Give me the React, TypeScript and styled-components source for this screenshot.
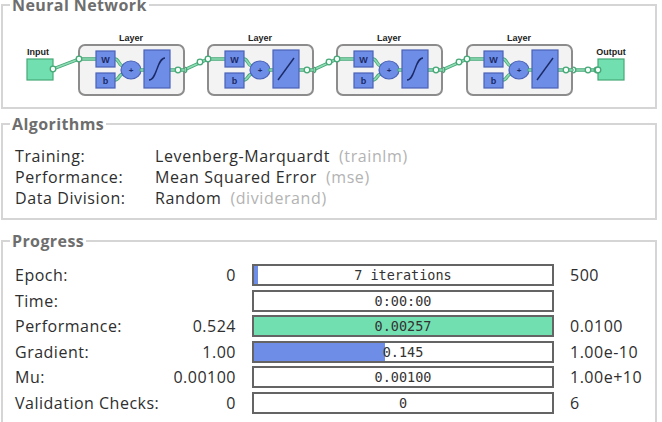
import React from 'react'
import styled, { createGlobalStyle } from 'styled-components'

const GREEN = '#72dfb0'
const GREEN_EDGE = '#46a877'
const WIRE = '#8fdcb4'
const BLUE = '#6e8de6'
const BLUE_EDGE = '#4a62b8'
const NAVY = '#1b2a66'

const GlobalStyle = createGlobalStyle`
  html, body { margin: 0; padding: 0; background: #fff; }
  body {
    font-family: "Open Sans", "Noto Sans", "Liberation Sans", sans-serif;
    color: #2e2e2e;
    overflow: hidden;
  }
`

const Page = styled.div`
  width: 662px;
  height: 428px;
  margin-top: -5px;
  padding: 0 5px 0 1px;
  box-sizing: border-box;
  display: flex;
  flex-direction: column;
  background: #fff;
`

const Group = styled.fieldset<{ $space?: number }>`
  margin: ${p => p.$space ?? 0}px 0 0;
  padding: 0;
  min-width: 0;
  border: 2px solid #d5d5d5;
`

const Legend = styled.legend`
  margin-left: 7px;
  padding: 0 2px;
  font-size: 16px;
  font-weight: 700;
  line-height: 20px;
  color: #6e6e6e;
  letter-spacing: 0.4px;
`

const Diagram = styled.svg`
  display: block;
  width: 652px;
  height: 92px;
`

const InfoGrid = styled.div`
  display: grid;
  grid-template-columns: 140px auto;
  justify-content: start;
  padding: 12px 12px 9px;
  font-size: 16px;
  line-height: 21px;
  letter-spacing: 0.6px;
`

const Hint = styled.span`
  color: #b3b3b3;
  margin-left: 9px;
`

const ProgressGrid = styled.div`
  display: grid;
  grid-template-columns: 140px 65px 302px 1fr;
  grid-auto-rows: 22px;
  column-gap: 16px;
  row-gap: 3.6px;
  align-items: center;
  padding: 13px 12px 20px;
  font-size: 16px;
  letter-spacing: 0.5px;
`

const Label = styled.span`
  white-space: nowrap;
`

const Start = styled.span`
  text-align: right;
  white-space: nowrap;
`

const Bar = styled.div`
  position: relative;
  height: 22px;
  box-sizing: border-box;
  border: 2px solid #646464;
  background: #fff;
  display: flex;
  align-items: center;
  justify-content: center;
  overflow: hidden;
  font-family: "DejaVu Sans Mono", "Liberation Mono", monospace;
  font-size: 13.5px;
  letter-spacing: 0;
  color: #333;
`

const Fill = styled.div<{ $color: string }>`
  position: absolute;
  left: 0;
  top: 0;
  bottom: 0;
  background: ${p => p.$color};
`

const BarText = styled.span`
  position: relative;
`

type Transfer = 'tansig' | 'purelin'

const layers: { x: number; f: Transfer }[] = [
  { x: 79, f: 'tansig' },
  { x: 208, f: 'purelin' },
  { x: 337, f: 'tansig' },
  { x: 467, f: 'purelin' },
]

const Wire = ({ d }: { d: string }) => (
  <g fill="none" strokeLinecap="round">
    <path d={d} stroke={GREEN_EDGE} strokeWidth={3.4} />
    <path d={d} stroke={WIRE} strokeWidth={1.6} />
  </g>
)

const Node = ({ cx, cy }: { cx: number; cy: number }) => (
  <circle cx={cx} cy={cy} r={2.8} fill="#f4fff9" stroke={GREEN_EDGE} strokeWidth={1.3} />
)

const Caption = ({ x, y, children }: { x: number; y: number; children: string }) => (
  <text x={x} y={y} textAnchor="middle" fontFamily="Liberation Sans, sans-serif" fontWeight={700} fontSize={9} fill="#222">
    {children}
  </text>
)

function LayerBlock({ x, f }: { x: number; f: Transfer }) {
  const curve =
    f === 'tansig'
      ? `M${x + 70} 80 C ${x + 78} 80, ${x + 78} 58, ${x + 86} 58`
      : `M${x + 70} 80 L${x + 86} 58`
  return (
    <g>
      <Caption x={x + 52} y={41}>Layer</Caption>
      <rect x={x} y={45} width={105} height={50} rx={6} fill="#f3f3f3" stroke="#8c8c8c" strokeWidth={2} />
      <Wire d={`M${x} 59 H${x + 17}`} />
      <Wire d={`M${x + 36} 59 C ${x + 40} 59, ${x + 40} 66, ${x + 44} 66`} />
      <Wire d={`M${x + 36} 80 C ${x + 40} 80, ${x + 40} 74, ${x + 44} 74`} />
      <Wire d={`M${x + 91} 70 H${x + 105}`} />
      <Node cx={x} cy={59} />
      <Node cx={x + 99} cy={70} />
      <rect x={x + 17} y={51} width={19} height={16} fill={BLUE} stroke={BLUE_EDGE} strokeWidth={1.2} />
      <text x={x + 26.5} y={62.5} textAnchor="middle" fontFamily="Liberation Sans, sans-serif" fontWeight={700} fontSize={9} fill={NAVY}>W</text>
      <rect x={x + 17} y={73} width={19} height={15} fill={BLUE} stroke={BLUE_EDGE} strokeWidth={1.2} />
      <text x={x + 26.5} y={84} textAnchor="middle" fontFamily="Liberation Sans, sans-serif" fontWeight={700} fontSize={9} fill={NAVY}>b</text>
      <ellipse cx={x + 52} cy={70} rx={10} ry={9} fill={BLUE} stroke={BLUE_EDGE} strokeWidth={1.2} />
      <text x={x + 52} y={73} textAnchor="middle" fontFamily="Liberation Sans, sans-serif" fontWeight={700} fontSize={8} fill={NAVY}>+</text>
      <Wire d={`M${x + 62} 70 H${x + 65}`} />
      <rect x={x + 65} y={50} width={26} height={38} fill={BLUE} stroke={BLUE_EDGE} strokeWidth={1.2} />
      <path d={curve} fill="none" stroke={NAVY} strokeWidth={1.4} />
    </g>
  )
}

function NetworkDiagram() {
  return (
    <Diagram viewBox="3 15 652 92">
      <Caption x={38} y={55}>Input</Caption>
      <rect x={27} y={59} width={26} height={21} fill={GREEN} stroke={GREEN_EDGE} strokeWidth={1.2} />
      <Wire d="M53 69 L79 59" />
      <Node cx={53} cy={69} />
      {layers.slice(0, -1).map((l, i) => (
        <g key={l.x}>
          <Wire d={`M${l.x + 105} 70 L${layers[i + 1].x} 59`} />
          <Node cx={l.x + 105} cy={70} />
          <Node cx={layers[i + 1].x - 8} cy={62} />
        </g>
      ))}
      <Wire d="M572 70 H597" />
      <Node cx={573} cy={70} />
      <Node cx={588} cy={70} />
      <Node cx={597} cy={70} />
      {layers.map(l => (
        <LayerBlock key={l.x} x={l.x} f={l.f} />
      ))}
      <Caption x={611} y={55}>Output</Caption>
      <rect x={598} y={59} width={26} height={21} fill={GREEN} stroke={GREEN_EDGE} strokeWidth={1.2} />
      <Node cx={598} cy={70} />
    </Diagram>
  )
}

const algorithms = [
  { label: 'Training:', value: 'Levenberg-Marquardt', fn: 'trainlm' },
  { label: 'Performance:', value: 'Mean Squared Error', fn: 'mse' },
  { label: 'Data Division:', value: 'Random', fn: 'dividerand' },
]

type ProgressRow = {
  label: string
  start: string
  text: string
  end: string
  fill: number
  color?: string
}

const progress: ProgressRow[] = [
  { label: 'Epoch:', start: '0', text: '7 iterations', end: '500', fill: 7 / 500, color: BLUE },
  { label: 'Time:', start: '', text: '0:00:00', end: '', fill: 0 },
  { label: 'Performance:', start: '0.524', text: '0.00257', end: '0.0100', fill: 1, color: GREEN },
  { label: 'Gradient:', start: '1.00', text: '0.145', end: '1.00e-10', fill: 0.44, color: BLUE },
  { label: 'Mu:', start: '0.00100', text: '0.00100', end: '1.00e+10', fill: 0 },
  { label: 'Validation Checks:', start: '0', text: '0', end: '6', fill: 0 },
]

export default function App() {
  return (
    <>
      <GlobalStyle />
      <Page>
        <Group>
          <Legend>Neural Network</Legend>
          <NetworkDiagram />
        </Group>

        <Group $space={5}>
          <Legend>Algorithms</Legend>
          <InfoGrid>
            {algorithms.map(a => (
              <React.Fragment key={a.label}>
                <Label>{a.label}</Label>
                <span>
                  {a.value}
                  <Hint>({a.fn})</Hint>
                </span>
              </React.Fragment>
            ))}
          </InfoGrid>
        </Group>

        <Group $space={11}>
          <Legend>Progress</Legend>
          <ProgressGrid>
            {progress.map(r => (
              <React.Fragment key={r.label}>
                <Label>{r.label}</Label>
                <Start>{r.start}</Start>
                <Bar>
                  {r.fill > 0 && r.color && (
                    <Fill $color={r.color} style={{ width: `${Math.min(r.fill, 1) * 100}%` }} />
                  )}
                  <BarText>{r.text}</BarText>
                </Bar>
                <span>{r.end}</span>
              </React.Fragment>
            ))}
          </ProgressGrid>
        </Group>
      </Page>
    </>
  )
}
